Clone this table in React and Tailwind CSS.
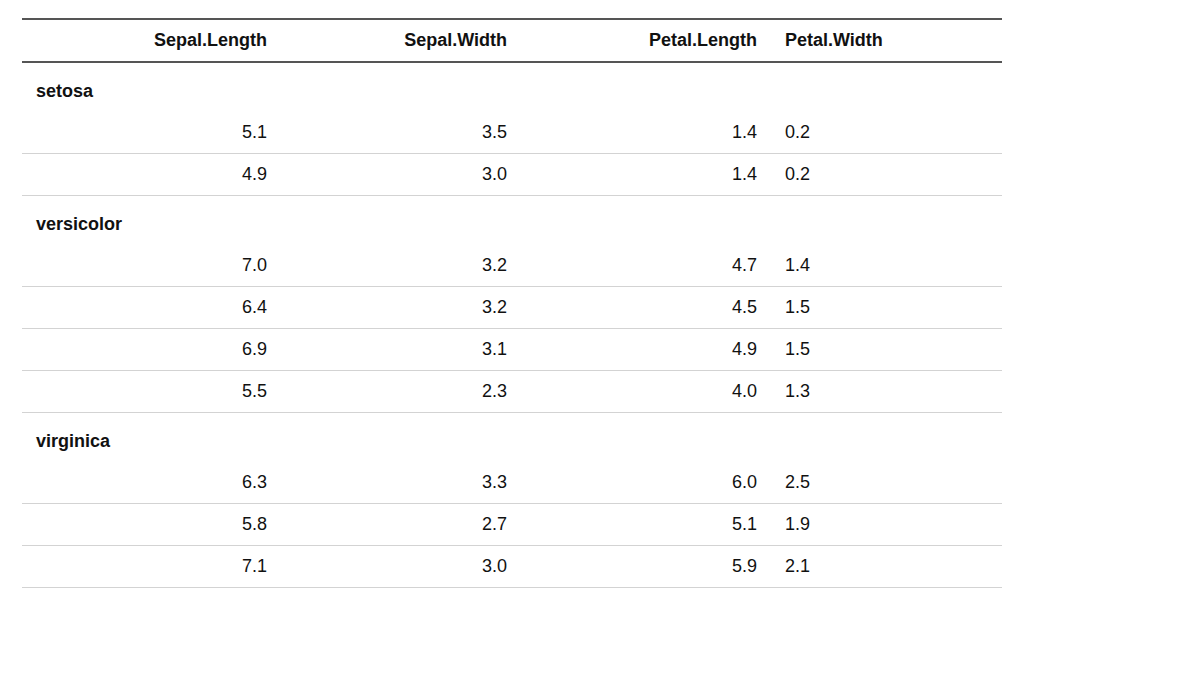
const groups = [
    {
        name: "setosa",
        rows: [
            ["5.1", "3.5", "1.4", "0.2"],
            ["4.9", "3.0", "1.4", "0.2"],
        ],
    },
    {
        name: "versicolor",
        rows: [
            ["7.0", "3.2", "4.7", "1.4"],
            ["6.4", "3.2", "4.5", "1.5"],
            ["6.9", "3.1", "4.9", "1.5"],
            ["5.5", "2.3", "4.0", "1.3"],
        ],
    },
    {
        name: "virginica",
        rows: [
            ["6.3", "3.3", "6.0", "2.5"],
            ["5.8", "2.7", "5.1", "1.9"],
            ["7.1", "3.0", "5.9", "2.1"],
        ],
    },
];

const align = ["text-right", "text-right", "text-right", "text-left"];

const App = () => {
    return (
        <div className="w-[1200px] h-[700px] bg-white pt-[18px] pl-[22px] text-[18px] text-[#111]" style={{ fontFamily: '"Liberation Sans", Arial, sans-serif' }}>
            <table className="w-[980px] table-fixed border-collapse border-t-2 border-[#555]">
                <colgroup>
                    <col className="w-[259px]" />
                    <col className="w-[240px]" />
                    <col className="w-[250px]" />
                    <col className="w-[231px]" />
                </colgroup>
                <thead>
                    <tr className="border-b-2 border-[#555]">
                        {["Sepal.Length", "Sepal.Width", "Petal.Length", "Petal.Width"].map((h, i) => (
                            <th key={h} className={`px-[14px] py-[11px] leading-[19px] font-bold ${align[i]}`}>
                                {h}
                            </th>
                        ))}
                    </tr>
                </thead>
                <tbody>
                    {groups.map(group => (
                        <>
                            <tr key={group.name}>
                                <td colSpan={4} className="px-[14px] pt-[19px] pb-[12px] leading-[18px] font-bold">
                                    {group.name}
                                </td>
                            </tr>
                            {group.rows.map((row, r) => (
                                <tr key={group.name + r} className="border-b border-[#d3d3d3]">
                                    {row.map((v, i) => (
                                        <td key={i} className={`px-[14px] py-[11px] leading-[19px] ${align[i]}`}>
                                            {v}
                                        </td>
                                    ))}
                                </tr>
                            ))}
                        </>
                    ))}
                </tbody>
            </table>
        </div>
    );
};

export default App;
